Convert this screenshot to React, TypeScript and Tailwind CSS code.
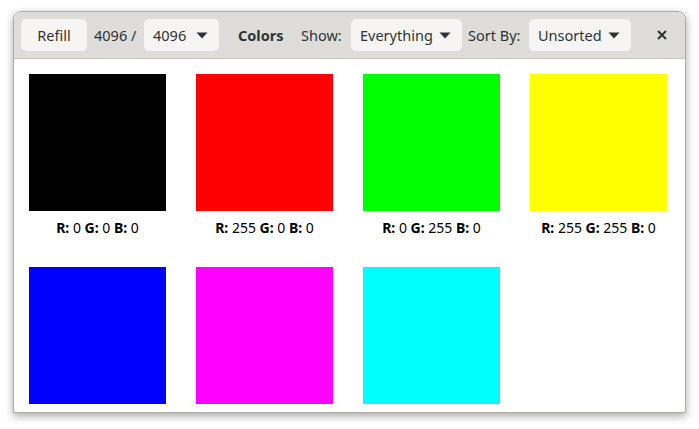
import React from 'react'

const colors = [
  { r: 0, g: 0, b: 0 },
  { r: 255, g: 0, b: 0 },
  { r: 0, g: 255, b: 0 },
  { r: 255, g: 255, b: 0 },
  { r: 0, g: 0, b: 255 },
  { r: 255, g: 0, b: 255 },
  { r: 0, g: 255, b: 255 },
]

function Arrow() {
  return (
    <svg width="12" height="7" viewBox="0 0 12 7" className="ml-auto">
      <path d="M0.5 0.5 L11.5 0.5 L6 6.5 Z" fill="#2e3436" />
    </svg>
  )
}

function Dropdown({ label, width }: { label: string; width: string }) {
  return (
    <div className={`flex h-[32px] shrink-0 items-center rounded-[5px] bg-[#f6f5f4] pl-[9px] pr-[11px] text-[#2e3436] ${width}`}>
      <span className="mt-[2px]">{label}</span>
      <Arrow />
    </div>
  )
}

export default function App() {
  return (
    <div className="h-[429px] w-[699px] bg-white pl-[13px] pt-[11px]" style={{ fontFamily: '"Noto Sans", sans-serif' }}>
      <div className="flex h-[402px] w-[673px] flex-col overflow-hidden rounded-t-[8px] border border-[#aeaba7] shadow-[0_3px_9px_rgba(0,0,0,0.35)]">
        <div className="flex h-[47px] shrink-0 items-center border-b border-[#c8c5c0] bg-[#deddda] pl-[7px] pr-[18px] text-[14.5px] text-[#2e3436]">
          <div className="flex h-[32px] w-[66px] shrink-0 items-center justify-center rounded-[5px] bg-[#f6f5f4]">
            <span className="mt-[2px]">Refill</span>
          </div>
          <span className="ml-[7px] mt-[2px] w-[50px] shrink-0">4096 /</span>
          <Dropdown label="4096" width="w-[75px]" />
          <span className="ml-[19px] mt-[2px] w-[63px] shrink-0 font-bold">Colors</span>
          <span className="mt-[2px] w-[50px] shrink-0">Show:</span>
          <Dropdown label="Everything" width="w-[111px]" />
          <span className="ml-[6px] mt-[2px] w-[61px] shrink-0">Sort By:</span>
          <Dropdown label="Unsorted" width="w-[102px]" />
          <svg width="10" height="10" viewBox="0 0 10 10" className="ml-auto">
            <path d="M1 1 L9 9 M9 1 L1 9" stroke="#2e3436" strokeWidth="2" />
          </svg>
        </div>
        <div className="flex-1 overflow-hidden bg-white pl-[15px] pt-[15px]">
          <div className="grid grid-cols-[repeat(4,137px)] gap-x-[30px] gap-y-[30px]">
            {colors.map((c, i) => (
              <div key={i} className="flex flex-col items-center">
                <div className="h-[137px] w-[137px]" style={{ backgroundColor: `rgb(${c.r},${c.g},${c.b})` }} />
                <div className="mt-[8px] h-[18px] text-[14px] leading-[18px] text-black">
                  <b>R:</b> {c.r} <b>G:</b> {c.g} <b>B:</b> {c.b}
                </div>
              </div>
            ))}
          </div>
        </div>
      </div>
    </div>
  )
}
